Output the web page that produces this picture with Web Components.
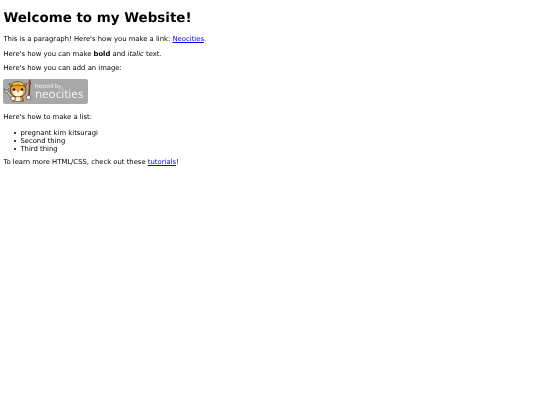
<!DOCTYPE html>
<html lang="en"><head><meta charset="utf-8">
<style>
html,body{margin:0;background:#fff}
body{padding:0 3.4px;font:6.84px/7.9px "DejaVu Sans",sans-serif;color:#000;text-rendering:geometricPrecision}
</style></head><body>
<site-page></site-page>
<template id="t-page">
<style>
:host{display:block;filter:blur(.25px)}
h1{font-size:13.45px;line-height:15.8px;margin:0 0 9.7px;padding-top:10.5px;font-weight:bold}
p{margin:0 0 6.8px}
a{color:#00e;text-decoration:underline}
ul{margin:0 0 6.5px;padding:0 0 0 17px;list-style:none}
li{margin:0;position:relative;line-height:8px}
li::before{content:"";position:absolute;left:-6.5px;top:3px;width:2.2px;height:2.2px;border-radius:50%;background:#000}
neo-badge{margin:-1.1px 0 9.9px}
</style>
<h1>Welcome to my Website!</h1>
<p>This is a paragraph! Here's how you make a link: <a href="#">Neocities</a>.</p>
<p>Here's how you can make <strong>bold</strong> and <em>italic</em> text.</p>
<p>Here's how you can add an image:</p>
<neo-badge></neo-badge>
<p>Here's how to make a list:</p>
<ul><li>pregnant kim kitsuragi</li><li>Second thing</li><li>Third thing</li></ul>
<p>To learn more HTML/CSS, check out these <a href="#">tutorials</a>!</p>
</template>
<template id="t-badge">
<style>
:host{display:block;width:85px;height:25px;position:relative;border-radius:2.5px;background:#a8a8a8}
svg{position:absolute;left:0;top:0}
.txt{position:absolute;left:31.5px;top:3.5px;color:#f4f4f4;font-family:"Open Sans",sans-serif;white-space:nowrap}
.a{display:block;font-size:5.8px;line-height:6px}
.b{display:block;font-size:11.7px;line-height:11px}
</style>
<svg width="34" height="25" viewBox="0 0 34 25">
<path d="M3.5 11.5 9 18" stroke="#444" stroke-width="2.4"/>
<path d="M3.5 11.5 9 18" stroke="#ddd" stroke-width="1.3"/>
<path d="M1.5 9.5 1.3 12.5 3.5 14 6 12.5 5.5 9.5 4.3 11.5 2.8 11.5z" fill="#ddd" stroke="#444" stroke-width=".6"/>
<path d="M26 17.5 26.7 5" stroke="#6a3a20" stroke-width="1.5"/>
<path d="M26.7 5.5 25.5 4.5 26.8 .5 28 4.5z" fill="#c23b3b" stroke="#5a2a22" stroke-width=".4"/>
<path d="M11 17h8l1.5 5h-11z" fill="#e99a34" stroke="#4a2f12" stroke-width=".7"/>
<path d="M13 18h4l.5 4h-5z" fill="#fbf2df"/>
<circle cx="10" cy="19.5" r="2.2" fill="#fff" stroke="#4a2f12" stroke-width=".6"/>
<circle cx="25.5" cy="18.5" r="2.2" fill="#fff" stroke="#4a2f12" stroke-width=".6"/>
<path d="M7.5 11C7.5 6.5 10.5 4 15 4s8 2.5 8 7-3.5 6.8-8 6.8S7.5 15.5 7.5 11z" fill="#ee9d35" stroke="#4a2f12" stroke-width=".8"/>
<path d="M7.5 8 6 4.5 10 5.5zM22.5 8 24 4.5 20 5.5z" fill="#ee9d35" stroke="#4a2f12" stroke-width=".6"/>
<path d="M8.5 7.2C9 4 12 2.5 15 2.5S21 4 21.5 7.2C18 5.8 12 5.8 8.5 7.2z" fill="#f3c63f" stroke="#4a2f12" stroke-width=".7"/>
<path d="M15 2.5v3.5" stroke="#a97a18" stroke-width=".8"/>
<path d="M9.5 13c1.500-1.800 3.500-1.800 5.500-.5 2-1.300 4-1.300 5.500.5-.8 3-3 4.500-5.500 4.500S10.300 16 9.500 13z" fill="#fcf3e2"/>
<circle cx="11" cy="10.5" r="1.3" fill="#222"/><circle cx="19" cy="10.5" r="1.3" fill="#222"/>
<path d="M14 12.5h2l-1 1z" fill="#4a2a1a"/>
</svg>
<div class="txt"><span class="a">hosted by,</span><span class="b">neocities</span></div>
</template>
<script>
class SitePage extends HTMLElement{constructor(){super();this.attachShadow({mode:"open"}).append(document.getElementById("t-page").content.cloneNode(true))}}
class NeoBadge extends HTMLElement{constructor(){super();this.attachShadow({mode:"open"}).append(document.getElementById("t-badge").content.cloneNode(true))}}
customElements.define("neo-badge",NeoBadge);
customElements.define("site-page",SitePage);
</script>
</body></html>
